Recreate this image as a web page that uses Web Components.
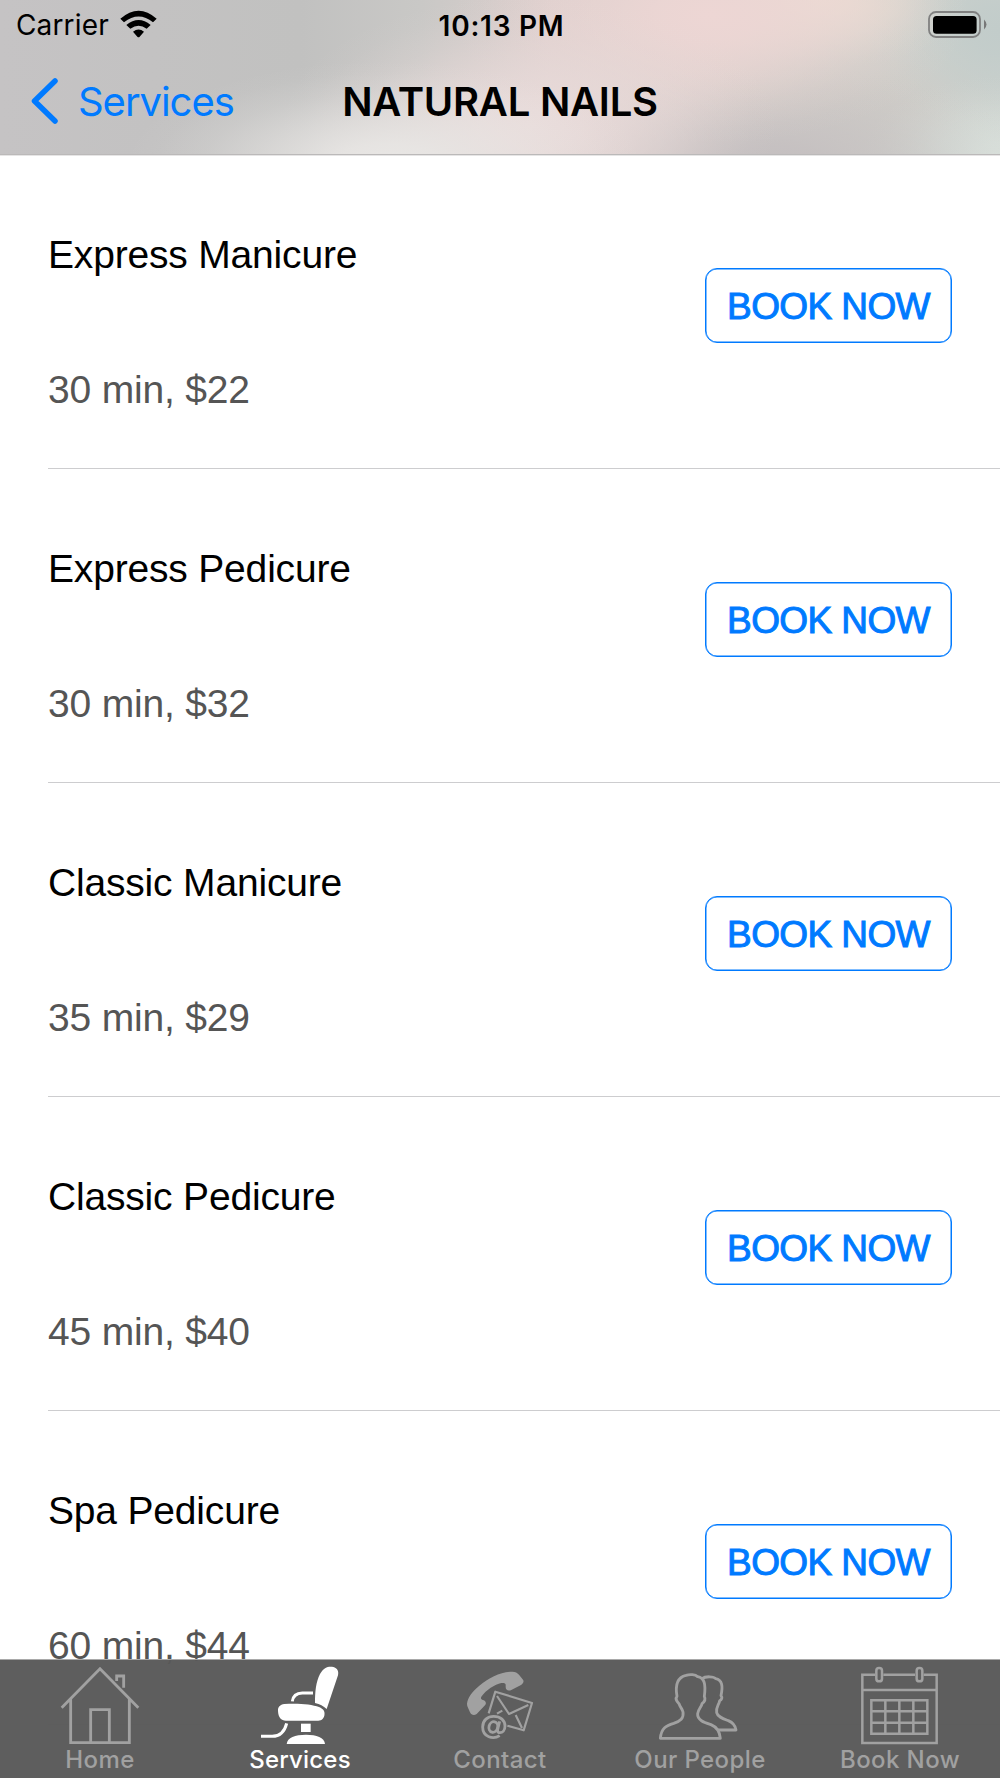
<!DOCTYPE html>
<html lang="en">

<head>
    <meta charset="UTF-8">
    <meta name="viewport" content="width=device-width, initial-scale=1.0">
    <title>Natural Nails</title>
    <style>
        * {
            box-sizing: border-box;
        }

        html,
        body {
            height: 100%;
            margin: 0;
            overflow: hidden;
        }

        body {
            background: #fff;
            color: #000;
            font-family: "Liberation Sans", Arial, sans-serif;
        }
    </style>
</head>

<body>
    <phone-screen>
        <nav-header slot="header" back="Services">
            <status-bar slot="status" carrier="Carrier" time="10:13 PM"></status-bar>
            NATURAL NAILS
        </nav-header>

        <service-row detail="30 min, $22">Express Manicure</service-row>
        <service-row detail="30 min, $32">Express Pedicure</service-row>
        <service-row detail="35 min, $29">Classic Manicure</service-row>
        <service-row detail="45 min, $40">Classic Pedicure</service-row>
        <service-row detail="60 min, $44">Spa Pedicure</service-row>

        <tab-bar slot="tabs">
            <tab-item icon="home">Home</tab-item>
            <tab-item icon="chair" active>Services</tab-item>
            <tab-item icon="contact">Contact</tab-item>
            <tab-item icon="people">Our People</tab-item>
            <tab-item icon="calendar">Book Now</tab-item>
        </tab-bar>
    </phone-screen>

    <script>
        class PhoneScreen extends HTMLElement {
            constructor() {
                super();
                this.attachShadow({ mode: "open" }).innerHTML = `
                    <style>
                        :host {
                            display: flex;
                            flex-direction: column;
                            width: 1000px;
                            height: 1778px;
                            overflow: hidden;
                        }

                        /* the list keeps going underneath the tab bar */
                        main {
                            flex: 1;
                            min-height: 0;
                            margin-bottom: -119px;
                            overflow: hidden;
                        }
                    </style>
                    <slot name="header"></slot>
                    <main><slot></slot></main>
                    <slot name="tabs"></slot>
                `;
            }
        }

        class StatusBar extends HTMLElement {
            constructor() {
                super();
                this.attachShadow({ mode: "open" });
            }

            connectedCallback() {
                this.shadowRoot.innerHTML = `
                    <style>
                        :host {
                            display: grid;
                            grid-template-columns: 1fr auto 1fr;
                            align-items: center;
                            height: 50px;
                            padding: 0 13px 0 16px;
                            font: 400 28px/34px Inter, sans-serif;
                        }

                        .left {
                            display: flex;
                            align-items: center;
                            gap: 11px;
                        }

                        .carrier { letter-spacing: 0.15px; }

                        .time {
                            padding-top: 1px;
                            font-weight: 600;
                            letter-spacing: 0.75px;
                        }

                        .battery { justify-self: end; }
                        svg { display: block; }
                        .wifi { margin-top: -3px; }
                    </style>
                    <div class="left">
                        <span class="carrier">${this.getAttribute("carrier")}</span>
                        <svg class="wifi" width="37" height="28" viewBox="360 28 111 84">
                            <path d="M361 54Q416 6 470 54L459 65Q416 30 372 65Z"/>
                            <path d="M379 73Q416 43 452 73L440 84Q416 66 391 84Z"/>
                            <path d="M399 93Q416 80 432 93L419 108Q416 112 412 108Z"/>
                        </svg>
                    </div>
                    <span class="time">${this.getAttribute("time")}</span>
                    <svg class="battery" width="59" height="28" viewBox="0 0 59 28">
                        <rect x="1" y="1" width="51" height="25" rx="7" fill="none" stroke="#808080" stroke-width="1.8"/>
                        <rect x="5" y="5" width="43.600" height="17.800" rx="3.500"/>
                        <path d="M56 8.500Q61 13.500 56 18.500Z" fill="#777"/>
                    </svg>
                `;
            }
        }

        // Soft blob of colour that eases out to nothing
        const glow = (color, rx, ry, x, y) =>
            `radial-gradient(ellipse ${rx}px ${ry}px at ${x}px ${y}px, ${color}, ${color}e0 20%, ${color}90 45%, ${color}38 70%, ${color}0c 88%, ${color}00)`;

        class NavHeader extends HTMLElement {
            constructor() {
                super();
                this.attachShadow({ mode: "open" });
            }

            connectedCallback() {
                const layers = [
                    glow("#e9e7e5", 260, 105, 385, 165),
                    glow("#e9dbda", 250, 130, 530, 125),
                    glow("#edd6d4", 260, 130, 710, 15),
                    glow("#e9dcd2", 150, 70, 820, 0),
                    glow("#c4bfc0", 260, 100, 770, 165),
                    glow("#d9e0db", 140, 85, 1000, 160),
                    glow("#c2ccca", 130, 110, 1000, 30),
                    glow("#cecbc7", 200, 80, 850, 100),
                    "linear-gradient(90deg, #c5c3c4, #c1c1c0 30%, #c9c8c6 42%, #dccfcd 55%, #dad0cd 70%, #d2d2cc 86%, #ccd2ce)"
                ];

                this.shadowRoot.innerHTML = `
                    <style>
                        :host {
                            display: block;
                            flex: none;
                            position: relative;
                            box-sizing: border-box;
                            height: 155px;
                            border-bottom: 1px solid #bbb9b9;
                            box-shadow: 0 1px #e6e5e5;
                            font-family: Inter, sans-serif;
                            background: ${layers.join(", ")};
                        }

                        .bar {
                            display: grid;
                            grid-template-columns: 1fr auto 1fr;
                            align-items: center;
                            height: 104px;
                            padding: 0 31px;
                        }

                        .back {
                            display: flex;
                            align-items: center;
                            gap: 19px;
                            color: #007aff;
                            font-size: 40px;
                            line-height: 48px;
                            letter-spacing: -1.05px;
                        }

                        .back svg { margin-top: -2px; }

                        .title {
                            font-size: 40px;
                            font-weight: 600;
                            line-height: 48px;
                            letter-spacing: -0.25px;
                        }
                    </style>
                    <slot name="status"></slot>
                    <div class="bar">
                        <span class="back">
                            <svg width="28" height="46" viewBox="0 0 28 46" fill="none" stroke="currentColor" stroke-width="5.500" stroke-linecap="round" stroke-linejoin="round">
                                <path d="M24 3L3.500 23L24 43"/>
                            </svg>
                            <span>${this.getAttribute("back")}</span>
                        </span>
                        <span class="title"><slot></slot></span>
                    </div>
                `;
            }
        }

        class BookButton extends HTMLElement {
            constructor() {
                super();
                this.attachShadow({ mode: "open" }).innerHTML = `
                    <style>
                        :host {
                            display: block;
                            flex: none;
                        }

                        button {
                            display: block;
                            width: 247px;
                            height: 75px;
                            padding: 2px 0 0;
                            border: 1px solid #007aff;
                            box-shadow: inset 0 0 0 0.5px #007aff;
                            border-radius: 12px;
                            background: none;
                            color: #007aff;
                            font: 37px/44px "Liberation Sans", Arial, sans-serif;
                            letter-spacing: -0.6px;
                            -webkit-text-stroke: 1px #007aff;
                        }
                    </style>
                    <button><slot></slot></button>
                `;
            }
        }

        class ServiceRow extends HTMLElement {
            constructor() {
                super();
                this.attachShadow({ mode: "open" });
            }

            connectedCallback() {
                this.shadowRoot.innerHTML = `
                    <style>
                        :host {
                            display: flex;
                            justify-content: space-between;
                            align-items: flex-start;
                            box-sizing: border-box;
                            height: 314px;
                            margin-left: 48px;
                            padding-right: 48px;
                            border-bottom: 1px solid #cdcdcf;
                            font-size: 39px;
                            line-height: 44px;
                        }

                        .text {
                            display: flex;
                            flex-direction: column;
                            gap: 91px;
                            padding-top: 78px;
                            letter-spacing: -0.18px;
                        }

                        .detail { color: #555; }
                        book-button { margin-top: 113px; }
                    </style>
                    <div class="text">
                        <span><slot></slot></span>
                        <span class="detail">${this.getAttribute("detail")}</span>
                    </div>
                    <book-button>BOOK NOW</book-button>
                `;
            }
        }

        class TabBar extends HTMLElement {
            constructor() {
                super();
                this.attachShadow({ mode: "open" }).innerHTML = `
                    <style>
                        :host {
                            display: grid;
                            grid-template-columns: repeat(5, 1fr);
                            flex: none;
                            position: relative;
                            box-sizing: border-box;
                            height: 119px;
                            border-top: 1px solid #a9a9a9;
                            background: rgba(89, 89, 89, 0.97);
                            background-clip: padding-box;
                        }
                    </style>
                    <slot></slot>
                `;
            }
        }

        // Icons share one 240 unit square
        const icons = {
            home: `
                <g fill="none" stroke="currentColor" stroke-width="8.500">
                    <path d="M185 323L300 206L415 323M212 298V428H388V298M272 428V329H328V428"/>
                    <path d="M350 243V228H371V263"/>
                </g>`,
            chair: `
                <g fill="currentColor">
                    <path d="M345 309C345 275 348 245 360 222C372 200 388 198 400 201C412 204 417 214 414 226L380 327C370 318 360 313 345 309Z"/>
                    <path d="M234 333C233 321 240 314 253 312C290 309 335 312 357 321C371 327 376 335 373 347C370 358 363 362 350 362H258C243 362 235 352 234 333Z"/>
                    <path d="M303 371H332V396H303Z"/>
                    <path d="M260 432C262 412 285 404 318 404C350 404 373 412 375 432Z"/>
                </g>
                <g fill="none" stroke="currentColor" stroke-width="9">
                    <path d="M339 279H307Q280 280 277 304"/>
                    <path d="M183 409H215Q250 410 260 370"/>
                </g>`,
            contact: `
                <path fill="currentColor" d="M201 311C203 293 216 275 238 257C267 233 302 216 337 215C347 215 351 218 357 224L369 239C373 245 369 251 363 255L334 270C324 274 317 270 317 261V254C317 249 311 248 304 249C284 254 259 269 244 290C241 295 244 298 249 300C258 303 260 310 255 316L230 342C222 348 214 345 210 337L203 321Q201 317 201 311Z"/>
                <g fill="none" stroke="currentColor" stroke-width="6.500" stroke-linejoin="round">
                    <path d="M266 340L286 275L396 309L371 391L322 377"/>
                    <path d="M291 288L327 342L385 315M347 345L366 384M291 341L307 332"/>
                </g>
                <g fill="none" stroke="currentColor" stroke-width="8.500">
                    <path d="M299 407C280 419 248 412 248 381C248 361 263 349 281 349C302 349 315 362 315 378C315 392 307 398 300 398C291 398 292 391 294 384L299 364"/>
                    <ellipse cx="280" cy="381" rx="13" ry="16" transform="rotate(15 280 381)"/>
                </g>`,
            people: `
                <g fill="none" stroke="currentColor" stroke-width="8.500" stroke-linejoin="round">
                    <path d="M181 415C184 384 199 377 221 370C241 363 252 355 249 336C247 326 240 322 237 311C228 302 226 295 231 289C225 255 232 232 258 226C270 222 286 223 293 230C313 234 318 251 313 289C317 297 315 304 306 311C304 322 295 326 293 341C291 361 315 368 333 374C350 381 359 395 361 415Z"/>
                    <path d="M306 236C316 228 342 229 347 236C367 240 369 259 363 287C368 293 365 299 359 302C357 315 347 321 350 338C353 351 369 356 385 362C401 369 406 377 408 390H352"/>
                </g>`,
            calendar: `
                <g fill="none" stroke="currentColor" stroke-width="7.500">
                    <path d="M225 224H187V429H410V224H371M250 224H345M187 270H410"/>
                    <rect x="229" y="204" width="17" height="40" rx="8"/>
                    <rect x="350" y="204" width="17" height="40" rx="8"/>
                    <path d="M214 301H382V401H214ZM256 301V401M298 301V401M340 301V401M214 334H382M214 368H382"/>
                </g>`
        };

        class TabItem extends HTMLElement {
            constructor() {
                super();
                this.attachShadow({ mode: "open" });
            }

            connectedCallback() {
                this.shadowRoot.innerHTML = `
                    <style>
                        :host {
                            display: flex;
                            flex-direction: column;
                            align-items: center;
                            padding-top: 5px;
                            color: #a1a1a1;
                            font: 500 24px/30px Inter, sans-serif;
                            letter-spacing: 0.4px;
                        }

                        :host([active]) {
                            color: #fff;
                            letter-spacing: 0.2px;
                        }

                        svg {
                            display: block;
                            overflow: visible;
                        }
                    </style>
                    <svg width="80" height="80" viewBox="180 195 240 240">${icons[this.getAttribute("icon")]}</svg>
                    <span><slot></slot></span>
                `;
            }
        }

        customElements.define("phone-screen", PhoneScreen);
        customElements.define("status-bar", StatusBar);
        customElements.define("nav-header", NavHeader);
        customElements.define("book-button", BookButton);
        customElements.define("service-row", ServiceRow);
        customElements.define("tab-bar", TabBar);
        customElements.define("tab-item", TabItem);
    </script>
</body>

</html>
